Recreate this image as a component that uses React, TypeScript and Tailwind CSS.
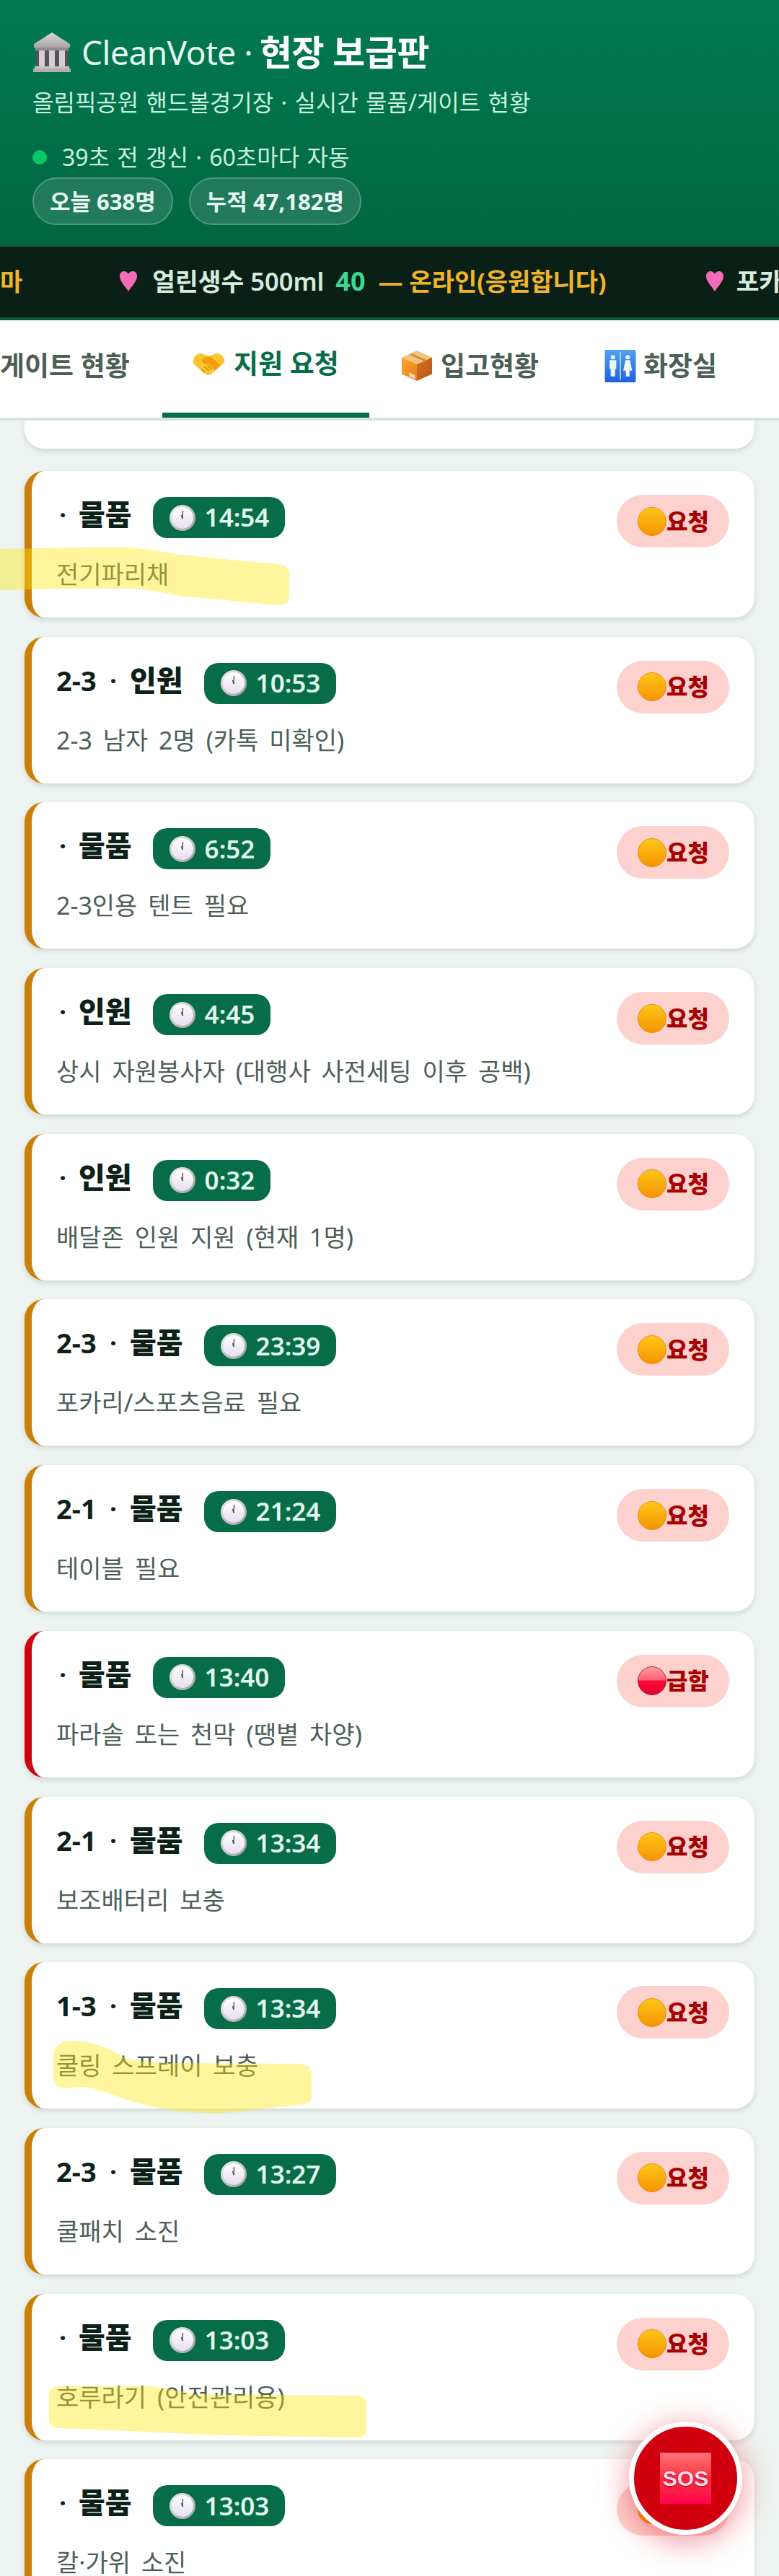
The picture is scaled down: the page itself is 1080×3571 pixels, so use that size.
const FONT = "font-['Noto_Sans','Noto_Sans_CJK_KR',sans-serif]";

function Bank() {
  return (
    <svg width="54" height="56" viewBox="0 0 54 56" className="shrink-0">
      <defs>
        <linearGradient id="bk" x1="0" y1="0" x2="0" y2="1"><stop offset="0" stopColor="#dcd8d8" /><stop offset="1" stopColor="#a9a4a6" /></linearGradient>
      </defs>
      <path d="M27 1 L52 17 V22 H2 V17 Z" fill="url(#bk)" />
      <rect x="4" y="22" width="46" height="4" fill="#8f8b8e" />
      <rect x="5" y="26" width="44" height="22" fill="#57525a" />
      <rect x="9" y="26" width="8" height="22" fill="#d4d0d2" />
      <rect x="23" y="26" width="8" height="22" fill="#d4d0d2" />
      <rect x="37" y="26" width="8" height="22" fill="#d4d0d2" />
      <rect x="3" y="48" width="48" height="3" fill="#c8c4c6" />
      <rect x="1" y="51" width="52" height="5" fill="#b3afb1" />
    </svg>
  );
}

function Heart() {
  return (
    <svg width="26" height="30" viewBox="0 0 26 30" className="shrink-0">
      <path d="M13 29 C8 21 1 15 1 8 C1 3 4 1 7 1 C10 1 12 3 13 5 C14 3 16 1 19 1 C22 1 25 3 25 8 C25 15 18 21 13 29 Z" fill="#f56bb8" />
    </svg>
  );
}

function Handshake() {
  return (
    <svg width="45" height="33" viewBox="0 0 44 32" className="shrink-0">
      <path d="M1 10 C3 4 8 1 13 2 C16 3 19 5 22 5 C25 5 28 3 31 2 C36 1 41 4 43 10 C44 13 42 16 39 18 L27 28 C24 31 20 32 17 30 L6 20 C2 17 0 14 1 10 Z" fill="#fcc52e" />
      <path d="M13 9 C17 6 21 6 25 7 C29 9 34 14 38 18 L30 25 C27 21 24 18 21 15 C18 17 15 16 13 13 Z" fill="#f59e0b" />
      <path d="M12 23 L17 27.5 M16 20 L22 25.5 M20 17.5 L26 23" stroke="#d98706" strokeWidth="1.6" fill="none" />
    </svg>
  );
}

function Box() {
  return (
    <svg width="46" height="44" viewBox="0 0 46 46" className="shrink-0">
      <defs>
        <linearGradient id="bxl" x1="0" y1="0" x2="1" y2="1"><stop offset="0" stopColor="#fba531" /><stop offset="1" stopColor="#e87f12" /></linearGradient>
        <linearGradient id="bxr" x1="0" y1="0" x2="1" y2="1"><stop offset="0" stopColor="#d9701e" /><stop offset="1" stopColor="#b8541a" /></linearGradient>
      </defs>
      <path d="M23 1 L45 11 L23 21 L1 11 Z" fill="#f3c27d" />
      <path d="M1 11 L23 21 V45 L1 35 Z" fill="url(#bxl)" />
      <path d="M45 11 L23 21 V45 L45 35 Z" fill="url(#bxr)" />
      <path d="M14 6 L36 16" stroke="#c98a3e" strokeWidth="3" />
      <path d="M12 33 L20 36.5 V42 L12 38.5 Z" fill="#f5e0c5" />
    </svg>
  );
}

function Restroom() {
  return (
    <svg width="44" height="45" viewBox="0 0 42 44" className="shrink-0">
      <defs>
        <linearGradient id="rs" x1="0" y1="0" x2="0" y2="1"><stop offset="0" stopColor="#4fa3ee" /><stop offset="1" stopColor="#1f5fe0" /></linearGradient>
      </defs>
      <rect width="42" height="44" rx="2" fill="url(#rs)" />
      <rect x="20.3" y="3" width="1.4" height="38" fill="#cfe5fb" />
      <circle cx="11" cy="10" r="3" fill="#eef6ff" />
      <path d="M6.5 14 H15.5 V26 H14 V36 H8 V26 H6.5 Z" fill="#eef6ff" />
      <circle cx="31" cy="10" r="3" fill="#eef6ff" />
      <path d="M28 14 H34 L37 28 H33.5 V36 H28.5 V28 H25 Z" fill="#eef6ff" />
    </svg>
  );
}

function Clock() {
  return (
    <svg width="36" height="36" viewBox="0 0 36 36" className="shrink-0">
      <defs>
        <linearGradient id="ck" x1="0" y1="0" x2="1" y2="1"><stop offset="0" stopColor="#f2f0f2" /><stop offset="1" stopColor="#9a9a9a" /></linearGradient>
        <linearGradient id="ckf" x1="0" y1="0" x2="0" y2="1"><stop offset="0" stopColor="#ffffff" /><stop offset="1" stopColor="#e6def0" /></linearGradient>
      </defs>
      <circle cx="18" cy="18" r="18" fill="url(#ck)" />
      <circle cx="18" cy="18" r="15" fill="url(#ckf)" />
      <path d="M18 19 L18.6 8" stroke="#3d3a42" strokeWidth="1.2" fill="none" />
      <path d="M18 19 L16.6 14" stroke="#55525a" strokeWidth="1.6" fill="none" />
    </svg>
  );
}

function Dot({ red }: { red?: boolean }) {
  const id = red ? "dr" : "do";
  return (
    <svg width="40" height="40" viewBox="0 0 40 40" className="shrink-0">
      <defs>
        {red ? (
          <linearGradient id={id} x1="0" y1="0" x2="0" y2="1">
            <stop offset="0" stopColor="#fba0a0" />
            <stop offset="0.48" stopColor="#fd5e70" />
            <stop offset="0.5" stopColor="#ff0a35" />
            <stop offset="1" stopColor="#e00030" />
          </linearGradient>
        ) : (
          <linearGradient id={id} x1="0" y1="0" x2="0" y2="1">
            <stop offset="0" stopColor="#ffc61a" />
            <stop offset="1" stopColor="#f59400" />
          </linearGradient>
        )}
      </defs>
      <circle cx="20" cy="20" r="19.5" fill={`url(#${id})`} stroke={red ? "#a0001c" : "#d98300"} strokeWidth="0.8" />
    </svg>
  );
}

type Item = {
  zone: string;
  kind: string;
  time: string;
  text: string;
  urgent?: boolean;
};

const items: Item[] = [
  { zone: "", kind: "물품", time: "14:54", text: "전기파리채" },
  { zone: "2-3", kind: "인원", time: "10:53", text: "2-3 남자 2명 (카톡 미확인)" },
  { zone: "", kind: "물품", time: "6:52", text: "2-3인용 텐트 필요" },
  { zone: "", kind: "인원", time: "4:45", text: "상시 자원봉사자 (대행사 사전세팅 이후 공백)" },
  { zone: "", kind: "인원", time: "0:32", text: "배달존 인원 지원 (현재 1명)" },
  { zone: "2-3", kind: "물품", time: "23:39", text: "포카리/스포츠음료 필요" },
  { zone: "2-1", kind: "물품", time: "21:24", text: "테이블 필요" },
  { zone: "", kind: "물품", time: "13:40", text: "파라솔 또는 천막 (땡볕 차양)", urgent: true },
  { zone: "2-1", kind: "물품", time: "13:34", text: "보조배터리 보충" },
  { zone: "1-3", kind: "물품", time: "13:34", text: "쿨링 스프레이 보충" },
  { zone: "2-3", kind: "물품", time: "13:27", text: "쿨패치 소진" },
  { zone: "", kind: "물품", time: "13:03", text: "호루라기 (안전관리용)" },
  { zone: "", kind: "물품", time: "13:03", text: "칼·가위 소진" },
];

function Card({ item }: { item: Item }) {
  return (
    <div className={`h-[203px] shrink-0 rounded-[27px] bg-white border-l-[10px] pl-[34px] pr-[35px] pt-[33px] shadow-[0_3px_7px_rgba(20,60,40,0.14)] ${item.urgent ? "border-[#d1000f]" : "border-[#cc7f05]"}`}>
      <div className="flex items-start justify-between">
        <div className="flex items-center h-[57px] mt-[3px]">
          <div className="flex items-center font-black text-[#0d2119] -mt-[9px] whitespace-nowrap">
            {item.zone ? <span className="text-[38px] leading-[48px] font-bold w-[56px]">{item.zone}</span> : null}
            <span className={`text-[34px] leading-[48px] font-bold text-center ${item.zone ? "w-[46px]" : "w-[18px] mr-[13px]"}`}>·</span>
            <span className="text-[40px] leading-[48px]">{item.kind}</span>
          </div>
          <span className="ml-[29px] flex items-center gap-[13px] h-[57px] rounded-[20px] bg-[#066d48] pl-[23px] pr-[22px] text-[35px] font-semibold text-[#e2f8ee]">
            <Clock />
            {item.time}
          </span>
        </div>
        <span className="flex items-center h-[73px] rounded-full bg-[#fdd1cd] pl-[29px] pr-[28px] text-[32px] font-black text-[#a80000]">
          <Dot red={item.urgent} />
          {item.urgent ? "급함" : "요청"}
        </span>
      </div>
      <p className="mt-[13px] text-[34px] leading-[48px] [word-spacing:6px] text-[#4c5f57] whitespace-nowrap">{item.text}</p>
    </div>
  );
}

export default function App() {
  return (
    <div className={`relative h-[3571px] w-[1080px] overflow-hidden bg-[#edf3f0] ${FONT}`}>
      <header className="h-[340px] bg-gradient-to-b from-[#017a52] to-[#016640] pl-[45px] pt-[44px]">
        <div className="flex items-center h-[56px] text-[46px] leading-[56px] tracking-[-0.5px] text-[#e6f9f0]">
          <Bank />
          <span className="ml-[14px]">CleanVote · </span>
          <span className="ml-[10px] text-[49px] font-bold text-white">현장 보급판</span>
        </div>
        <p className="mt-[18px] text-[32px] leading-[48px] [word-spacing:2px] text-[#c8f0dc]">올림픽공원 핸드볼경기장 · 실시간 물품/게이트 현황</p>
        <div className="mt-[30px] flex items-center text-[32px] leading-[44px] [word-spacing:2px] text-[#c8f0dc]">
          <span className="size-[20px] rounded-full bg-[#0bc765]" />
          <span className="ml-[21px]">39초 전 갱신 · 60초마다 자동</span>
        </div>
        <div className="mt-[6px] flex gap-[22px]">
          <span className="flex items-center h-[66px] rounded-full border-2 border-[#4b9a7c] bg-[#217a5c] px-[22px] text-[31px] font-bold text-[#e6f9f0]">오늘 638명</span>
          <span className="flex items-center h-[66px] rounded-full border-2 border-[#4b9a7c] bg-[#217a5c] px-[22px] text-[31px] font-bold text-[#e6f9f0]">누적 47,182명</span>
        </div>
      </header>

      <div className="h-[104px] bg-[#0a2016] border-t-[2px] border-b-[4px] border-[#0b5c3f] overflow-hidden flex items-center whitespace-nowrap font-semibold">
        <div className="flex items-center shrink-0 -mt-[2px]">
          <span className="text-[34px] font-bold text-[#f0b429]">마</span>
          <span className="ml-[134px]"><Heart /></span>
          <span className="ml-[20px] text-[34.5px] text-[#d5ecdf]">얼린생수 500ml</span>
          <span className="ml-[16px] text-[36px] font-bold text-[#3fd692]">40</span>
          <span className="ml-[18px] text-[34px] font-bold text-[#f0b429]">— 온라인(응원합니다)</span>
          <span className="ml-[137px]"><Heart /></span>
          <span className="ml-[17px] text-[34.5px] text-[#d5ecdf]">포카리</span>
        </div>
      </div>

      <nav className="relative z-10 h-[139px] bg-white border-b-[4px] border-[#d5e5de] text-[37px] font-bold text-[#4c5f57] whitespace-nowrap overflow-hidden">
        <div className="flex h-[135px]">
          <div className="w-[225px] shrink-0 flex items-center h-[126px]">게이트 현황</div>
          <div className="w-[287px] shrink-0 flex items-center justify-center h-[135px] text-[#066d48] gap-[12px] pb-[8px] border-b-[7px] border-[#066d48]">
            <Handshake />
            지원 요청
          </div>
          <div className="w-[278px] shrink-0 flex items-center justify-center h-[126px] gap-[10px]">
            <Box />
            입고현황
          </div>
          <div className="w-[252px] shrink-0 flex items-center justify-center h-[126px] gap-[10px]">
            <Restroom />
            화장실
          </div>
        </div>
      </nav>

      <main className="px-[34px] flex flex-col">
        <div className="h-[39px] mb-[31px] rounded-b-[27px] bg-white shadow-[0_3px_7px_rgba(20,60,40,0.14)]" />
        <div className="flex flex-col gap-[26.7px]">
          {items.map((item, i) => (
            <Card key={i} item={item} />
          ))}
        </div>
      </main>

      <svg className="absolute inset-0 pointer-events-none" width="1080" height="3571" viewBox="0 0 1080 3571">
        <path d="M0 761 L165 758 Q207 760 248 769 L384 782 Q401 783 401 795 L401 826 Q401 839 384 839 L248 826 Q217 819 186 816 L103 816 L0 818 Z" fill="#ffe60a" fillOpacity="0.4" />
        <path d="M91 2830 Q129 2825 176 2854 Q207 2860 238 2860 L413 2861 Q432 2861 432 2877 L432 2906 Q432 2918 413 2918 L310 2929 Q238 2931 176 2911 Q129 2893 114 2893 L91 2895 Q74 2893 74 2879 L74 2849 Q74 2834 91 2830 Z" fill="#ffe60a" fillOpacity="0.4" />
        <path d="M81 3308 L207 3308 Q238 3311 269 3319 L496 3321 Q508 3322 508 3335 L508 3368 Q508 3379 496 3379 L310 3376 L155 3369 L81 3366 Q68 3364 68 3353 L68 3320 Q68 3309 81 3308 Z" fill="#ffe60a" fillOpacity="0.4" />
      </svg>

      <button className="absolute left-[872px] top-[3357px] size-[157px] rounded-full border-[7px] border-white bg-[#d0000f] flex items-center justify-center shadow-[0_8px_44px_rgba(220,0,20,0.45)]">
        <span className="flex items-center justify-center size-[71px] bg-gradient-to-b from-[#ff7078] via-[#ff2a3a] to-[#ff0050] font-['Liberation_Sans',sans-serif] text-[30px] font-bold text-[#ffdbe8] [text-shadow:0_1px_2px_#8a0030]">SOS</span>
      </button>
    </div>
  );
}
